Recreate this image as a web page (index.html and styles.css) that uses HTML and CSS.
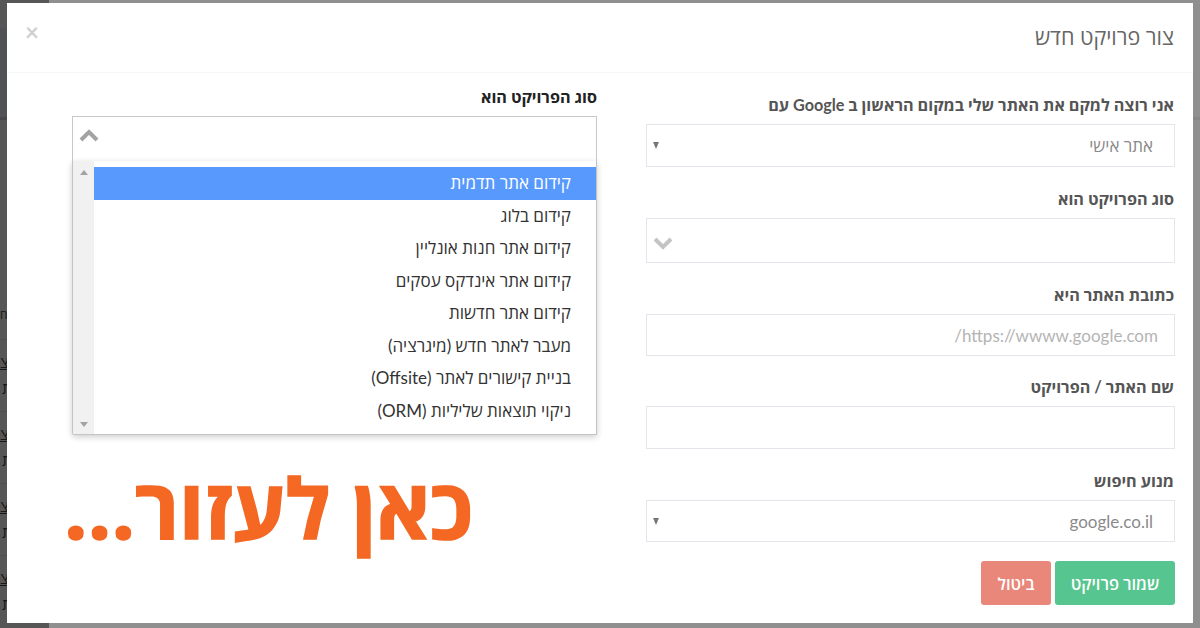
FILE: index.html
```html
<!DOCTYPE html>
<html lang="he">
<head>
    <meta charset="UTF-8">
    <meta name="viewport" content="width=device-width, initial-scale=1.0">
    <title>צור פרויקט חדש</title>
    <link rel="stylesheet" href="styles.css">
</head>
<body>
    <!-- Page behind the modal -->
    <div class="backdrop">
        <div class="sidebar">
            <div class="side-band"></div>
            <div class="side-title">ח:</div>
            <div class="side-row"><span class="side-name">צ</span><span class="side-sub">ת</span></div>
            <div class="side-row"><span class="side-name">צ</span><span class="side-sub">ת</span></div>
            <div class="side-row"><span class="side-name">צ</span><span class="side-sub">ת</span></div>
            <div class="side-row"><span class="side-name">צ</span><span class="side-sub">ת</span></div>
        </div>
        <div class="page-main">
            <div class="main-band"></div>
        </div>
    </div>

    <div class="modal" dir="rtl">
        <div class="modal-header">
            <h2>צור פרויקט חדש</h2>
            <span class="close">×</span>
        </div>

        <div class="modal-body">
            <!-- Form column -->
            <div class="form-col">
                <div class="form-group">
                    <label>אני רוצה למקם את האתר שלי במקום הראשון ב Google עם</label>
                    <div class="field">
                        <span class="value">אתר אישי</span>
                        <span class="caret"></span>
                    </div>
                </div>
                <div class="form-group">
                    <label>סוג הפרויקט הוא</label>
                    <div class="field tall">
                        <svg class="chevron down" viewBox="0 0 20 14" width="20" height="14"><path d="M2 3l8 8 8-8" fill="none" stroke="#c4c4c4" stroke-width="4"/></svg>
                    </div>
                </div>
                <div class="form-group">
                    <label>כתובת האתר היא</label>
                    <div class="field short">
                        <span class="value hint">https://wwww.google.com/</span>
                    </div>
                </div>
                <div class="form-group">
                    <label>שם האתר / הפרויקט</label>
                    <div class="field"></div>
                </div>
                <div class="form-group">
                    <label>מנוע חיפוש</label>
                    <div class="field short">
                        <span class="value">google.co.il</span>
                        <span class="caret"></span>
                    </div>
                </div>
                <div class="actions">
                    <button class="btn btn-save">שמור פרויקט</button>
                    <button class="btn btn-cancel">ביטול</button>
                </div>
            </div>

            <!-- Open dropdown column -->
            <div class="drop-col">
                <label>סוג הפרויקט הוא</label>
                <div class="drop-box">
                    <svg class="chevron" viewBox="0 0 20 14" width="20" height="14"><path d="M2 11l8-8 8 8" fill="none" stroke="#a3a3a3" stroke-width="4"/></svg>
                </div>
                <div class="drop-list">
                    <ul>
                        <li class="selected">קידום אתר תדמית</li>
                        <li>קידום בלוג</li>
                        <li>קידום אתר חנות אונליין</li>
                        <li>קידום אתר אינדקס עסקים</li>
                        <li>קידום אתר חדשות</li>
                        <li>מעבר לאתר חדש (מיגרציה)</li>
                        <li>בניית קישורים לאתר (Offsite)</li>
                        <li>ניקוי תוצאות שליליות (ORM)</li>
                    </ul>
                    <div class="scrollbar">
                        <span class="arrow-up"></span>
                        <span class="arrow-down"></span>
                    </div>
                </div>
                <div class="promo">כאן לעזור...</div>
            </div>
        </div>
    </div>
</body>
</html>
```

FILE: styles.css
```css
* {
    margin: 0;
    padding: 0;
    box-sizing: border-box;
}

body {
    font-family: 'Lato', 'Open Sans', 'Noto Sans', sans-serif;
    background: #8f8f8f;
    height: 628px;
    overflow: hidden;
}

.backdrop {
    display: flex;
    height: 628px;
}

.sidebar {
    width: 49px;
    background: #565656;
    color: #181818;
    font-size: 16px;
    line-height: 20px;
    overflow: hidden;
}

.side-band {
    height: 92px;
    margin-top: 28px;
    background: #505256;
    border-bottom: 3px solid #474747;
}

.side-title {
    margin-top: 185px;
    height: 34px;
    font-size: 12px;
    white-space: nowrap;
}

.side-row {
    height: 72px;
    padding-top: 12px;
    border-top: 1px solid #4e4e4e;
}

.side-name {
    display: block;
    text-decoration: underline;
    height: 26px;
}

.side-sub {
    display: block;
    padding-left: 2px;
}

.page-main {
    flex: 1;
}

.main-band {
    height: 92px;
    margin-top: 28px;
    border-bottom: 3px solid #868686;
}

.modal {
    position: absolute;
    left: 7px;
    top: 3px;
    width: 1186px;
    height: 620px;
    background: white;
}

.modal-header {
    height: 70px;
    padding: 0 19px 2px;
    display: flex;
    justify-content: space-between;
    align-items: center;
    border-bottom: 1px solid #f6f6f6;
}

.modal-header h2 {
    font-size: 21.5px;
    font-weight: 400;
    color: #666;
}

.close {
    font-size: 24px;
    font-weight: 700;
    color: #d0d0d0;
    margin-left: -1px;
    margin-top: -10px;
}

.modal-body {
    display: flex;
    gap: 49px;
    padding-right: 18px;
    padding-left: 65px;
}

.form-col {
    width: 530px;
    padding-top: 20px;
}

.drop-col {
    width: 525px;
    padding-top: 12px;
}

label {
    display: block;
    height: 24px;
    line-height: 24px;
    margin-bottom: 7px;
    padding-right: 1px;
    font-size: 16.2px;
    font-weight: 700;
    color: #555;
    white-space: nowrap;
}

.drop-col label {
    padding-right: 0;
    color: #222;
}

.form-group {
    margin-bottom: 20px;
}

.field {
    height: 43px;
    border: 1px solid #e5e6ec;
    display: flex;
    justify-content: space-between;
    align-items: center;
    padding: 0 21px 0 6px;
}

.field.tall {
    height: 45px;
}

.field.short {
    height: 42px;
    margin-bottom: -1px;
}

.value {
    font-size: 17px;
    color: #8a8a8a;
}

.value.hint {
    margin-right: -5px;
    color: #b4b4b4;
}

.caret {
    width: 0;
    height: 0;
    border-left: 3.5px solid transparent;
    border-right: 3.5px solid transparent;
    border-top: 7px solid #777;
}

.chevron.down {
    margin-right: auto;
    margin-top: 4px;
}

.actions {
    display: flex;
    gap: 4px;
}

.btn {
    height: 44px;
    border: none;
    border-radius: 3px;
    color: white;
    font-family: inherit;
    font-size: 16.5px;
    font-weight: 600;
}

.btn-save {
    width: 120px;
    background: #57c58f;
}

.btn-cancel {
    width: 70px;
    background: #e9877a;
}

.drop-box {
    height: 45px;
    border: 1px solid #c8c8c8;
    border-bottom: none;
    display: flex;
    align-items: center;
    justify-content: flex-end;
    padding-left: 6px;
    padding-bottom: 6px;
}

.drop-list {
    height: 274px;
    display: flex;
    border: 1px solid #c4c4c4;
    border-top: none;
    border-radius: 0 0 0 2px;
    box-shadow: 0 2px 6px rgba(0,0,0,0.2);
    background: white;
}

.drop-list ul {
    flex: 1;
    list-style: none;
    padding-top: 6px;
}

.drop-list li {
    height: 32.5px;
    line-height: 31px;
    padding-right: 25px;
    font-size: 17px;
    color: #333;
}

.drop-list li.selected {
    background: #5899fe;
    color: white;
}

.scrollbar {
    width: 21px;
    background: #f1f1f1;
    display: flex;
    flex-direction: column;
    justify-content: space-between;
    align-items: center;
    padding: 9px 0 7px;
}

.arrow-up, .arrow-down {
    width: 0;
    height: 0;
    border-left: 4.5px solid transparent;
    border-right: 4.5px solid transparent;
}

.arrow-up {
    border-bottom: 5px solid #a3a3a3;
}

.arrow-down {
    border-top: 5px solid #a3a3a3;
}

.promo {
    margin-top: 17px;
    padding-right: 124px;
    font-family: 'Open Sans', sans-serif;
    font-size: 83px;
    line-height: 110px;
    font-weight: 700;
    -webkit-text-stroke: 1.5px #f46824;
    color: #f46824;
    white-space: nowrap;
}
```
